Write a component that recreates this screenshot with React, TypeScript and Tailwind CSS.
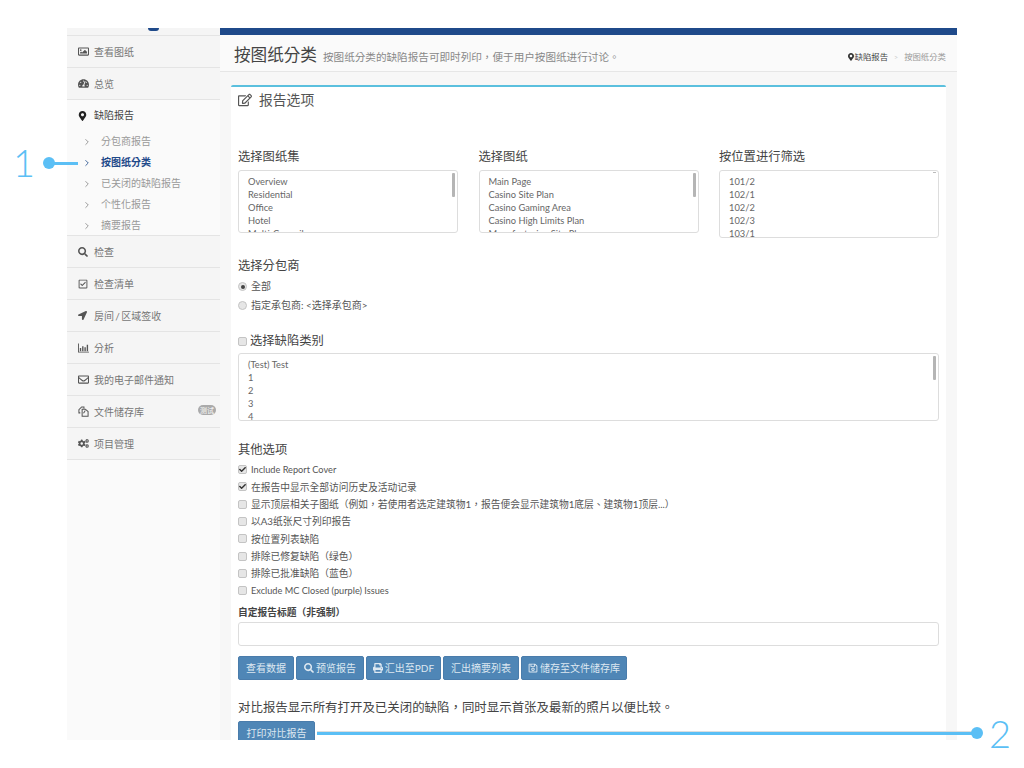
import {
  FaRegImage,
  FaTachometerAlt,
  FaMapMarkerAlt,
  FaSearch,
  FaRegCheckSquare,
  FaLocationArrow,
  FaRegEnvelope,
  FaCogs,
  FaRegEdit,
  FaPrint,
  FaRegSave,
  FaCheck,
} from "react-icons/fa"
import { LuChevronRight } from "react-icons/lu"
import type { ReactNode } from "react"

function BarsIcon() {
  return (
    <svg viewBox="0 0 12 10" className="w-[11px] h-[10px]" fill="currentColor">
      <path d="M0 0h1v9h11v1H0z" />
      <path d="M2 5h1.5v3.5H2zM4.5 3h1.5v5.5H4.5zM7 4.2h1.5v4.3H7zM9.5 1.5H11v7H9.5z" />
    </svg>
  )
}

function FilesIcon() {
  return (
    <svg viewBox="0 0 12 12" className="w-[11px] h-[11px]" fill="none" stroke="currentColor" strokeWidth="1.1">
      <path d="M2.5 7.5H1V4l3-3h2.5v2" />
      <path d="M4.5 3.5H8l3 2.5v5.2H4.5z" />
      <path d="M6 8l2-3" />
    </svg>
  )
}

function MenuRow({ icon, label, badge }: { icon: ReactNode; label: string; badge?: string }) {
  return (
    <div className="h-[32px] flex items-center pl-[11px] pr-[4px] bg-[#f5f5f5] border-b border-[#e4e4e4] text-[#777]">
      <span className="w-[16px] flex justify-start text-[#555]">{icon}</span>
      <span className="mt-[1px] text-[10px] [word-spacing:-1.2px]">{label}</span>
      {badge && (
        <span className="ml-auto mb-[4px] h-[10px] w-[18px] rounded-full bg-[#aaa] text-white text-[7px] leading-[10px] text-center">
          {badge}
        </span>
      )}
    </div>
  )
}

function SubRow({ label, active }: { label: string; active?: boolean }) {
  return (
    <div className="h-[21px] flex items-center pl-[15px]">
      <LuChevronRight className={active ? "w-[10px] h-[10px] text-[#1f4a8a]" : "w-[10px] h-[10px] text-[#888]"} />
      <span className={active ? "ml-[9px] text-[10px] font-bold text-[#1f4a8a]" : "ml-[9px] text-[10px] text-[#999]"}>
        {label}
      </span>
    </div>
  )
}

function ListBox({ items, h, thumb, tiny }: { items: string[]; h: string; thumb?: boolean; tiny?: boolean }) {
  return (
    <div className={`${h} relative overflow-hidden rounded-[3px] border border-[#ddd] pl-[9px] pt-[4px] text-[9.3px] leading-[13.1px] text-[#666]`}>
      {items.map((t) => (
        <div key={t}>{t}</div>
      ))}
      {thumb && <div className="absolute right-[2px] top-[2px] w-[3px] h-[24px] rounded-[1px] bg-[#b5b5b5]" />}
      {tiny && <div className="absolute right-[2px] top-[1px] w-[3px] h-[1px] bg-[#bbb]" />}
    </div>
  )
}

function Check({ on }: { on?: boolean }) {
  return (
    <span className="w-[9px] h-[9px] shrink-0 rounded-[2px] border border-[#c4c4c4] bg-[#e6e6e6] flex items-center justify-center">
      {on && <FaCheck className="w-[7px] h-[7px] text-[#333]" />}
    </span>
  )
}

function Radio({ on }: { on?: boolean }) {
  return (
    <span className="w-[9px] h-[9px] shrink-0 rounded-full border border-[#c4c4c4] bg-[#e6e6e6] flex items-center justify-center">
      {on && <span className="w-[4px] h-[4px] rounded-full bg-[#444]" />}
    </span>
  )
}

function Btn({ w, icon, children }: { w: string; icon?: ReactNode; children: ReactNode }) {
  return (
    <div className={`${w} h-[24px] flex items-center justify-center gap-[2px] rounded-[2px] bg-[#4f86b6] border border-[#4a7cab] text-[10px] text-[#dde8f1]`}>
      {icon}
      <span>{children}</span>
    </div>
  )
}

const options = [
  { label: "Include Report Cover", on: true, latin: true },
  { label: "在报告中显示全部访问历史及活动记录", on: true },
  { label: "显示顶层相关子图纸（例如，若使用者选定建筑物1，报告便会显示建筑物1底层、建筑物1顶层...）" },
  { label: "以A3纸张尺寸列印报告" },
  { label: "按位置列表缺陷" },
  { label: "排除已修复缺陷（绿色）" },
  { label: "排除已批准缺陷（蓝色）" },
  { label: "Exclude MC Closed (purple) Issues", latin: true },
]

export default function App() {
  return (
    <div className="relative w-[1024px] h-[768px] overflow-hidden bg-white pt-[28px] pl-[67px] font-['Lato','Noto_Sans_CJK_TC',sans-serif]">
      <div className="w-[890px] h-[712px] flex overflow-hidden">
        {/* sidebar */}
        <aside className="w-[153px] h-full shrink-0 bg-[#fafafa]">
          <div className="h-[8px] bg-[#f5f5f5] border-b border-[#e4e4e4] flex justify-center">
            <span className="ml-[20px] w-[11px] h-[3px] rounded-b-full bg-[#1f4a8a]" />
          </div>
          <MenuRow icon={<FaRegImage className="w-[11px] h-[11px]" />} label="查看图纸" />
          <MenuRow icon={<FaTachometerAlt className="w-[11px] h-[11px]" />} label="总览" />
          <div className="h-[136px] bg-[#fafafa] border-b border-[#e4e4e4]">
            <div className="h-[31px] flex items-center pl-[11px] text-[#444]">
              <span className="w-[16px]">
                <FaMapMarkerAlt className="w-[9px] h-[10px] text-[#222]" />
              </span>
              <span className="text-[10px]">缺陷报告</span>
            </div>
            <div>
              <SubRow label="分包商报告" />
              <SubRow label="按图纸分类" active />
              <SubRow label="已关闭的缺陷报告" />
              <SubRow label="个性化报告" />
              <SubRow label="摘要报告" />
            </div>
          </div>
          <MenuRow icon={<FaSearch className="w-[10px] h-[10px]" />} label="检查" />
          <MenuRow icon={<FaRegCheckSquare className="w-[10px] h-[10px]" />} label="检查清单" />
          <MenuRow icon={<FaLocationArrow className="w-[9px] h-[9px]" />} label="房间 / 区域签收" />
          <MenuRow icon={<BarsIcon />} label="分析" />
          <MenuRow icon={<FaRegEnvelope className="w-[11px] h-[11px]" />} label="我的电子邮件通知" />
          <MenuRow icon={<FilesIcon />} label="文件储存库" badge="测试" />
          <MenuRow icon={<FaCogs className="w-[11px] h-[11px]" />} label="项目管理" />
        </aside>

        {/* main */}
        <main className="w-[737px] shrink-0 h-full bg-[#f7f7f7]">
          <div className="h-[7px] bg-[#1f4a8a]" />
          <div className="h-[37px] bg-[#fafafa] border-b border-[#e6e6e6] flex items-center pt-[4px] pl-[14px] pr-[11px]">
            <h1 className="text-[16.6px] text-[#444]">按图纸分类</h1>
            <span className="ml-[6px] mt-[5px] text-[10.6px] text-[#888]">按图纸分类的缺陷报告可即时列印，便于用户按图纸进行讨论。</span>
            <div className="ml-auto flex items-center text-[8.4px] mt-[5px]">
              <FaMapMarkerAlt className="w-[6px] h-[8px] mr-[1px] text-[#333]" />
              <span className="text-[#444]">缺陷报告</span>
              <span className="mx-[6px] text-[#ccc] text-[7px]">&gt;</span>
              <span className="text-[#999]">按图纸分类</span>
            </div>
          </div>

          <section className="mt-[13px] ml-[11px] w-[715px] h-[700px] bg-white rounded-t-[2px] border-t-2 border-[#5bc0de] px-[7px]">
            <div className="h-[26px] flex items-center text-[#555]">
              <FaRegEdit className="w-[14px] h-[14px] text-[#555]" />
              <span className="ml-[7px] text-[13.8px]">报告选项</span>
            </div>

            <div className="mt-[32px] grid grid-cols-3 gap-x-[20.5px] items-start">
              <div>
                <h3 className="h-[25px] text-[12.3px] leading-[23px] text-[#444]">选择图纸集</h3>
                <ListBox h="h-[63px]" thumb items={["Overview", "Residential", "Office", "Hotel", "Multi-Council"]} />
              </div>
              <div>
                <h3 className="h-[25px] text-[12.3px] leading-[23px] text-[#444]">选择图纸</h3>
                <ListBox h="h-[63px]" thumb items={["Main Page", "Casino Site Plan", "Casino Gaming Area", "Casino High Limits Plan", "Manufacturing Site Plan"]} />
              </div>
              <div>
                <h3 className="h-[25px] text-[12.3px] leading-[23px] text-[#444]">按位置进行筛选</h3>
                <ListBox h="h-[68px]" tiny items={["101/2", "102/1", "102/2", "102/3", "103/1", "103/2"]} />
              </div>
            </div>

            <h3 className="mt-[17px] h-[22px] text-[12.3px] leading-[22px] text-[#444]">选择分包商</h3>
            <div className="flex items-center gap-[4px] h-[19px] text-[10px] text-[#555]">
              <Radio on />
              <span>全部</span>
            </div>
            <div className="flex items-center gap-[4px] h-[19px] text-[10px] text-[#555]">
              <Radio />
              <span>指定承包商:  &lt;选择承包商&gt;</span>
            </div>

            <div className="mt-[15px] h-[22px] flex items-center gap-[3px] text-[12.3px] text-[#444]">
              <Check />
              <span>选择缺陷类别</span>
            </div>
            <div className="mt-[1px]">
              <ListBox h="h-[68px]" thumb items={["(Test) Test", "1", "2", "3", "4", "5"]} />
            </div>

            <h3 className="mt-[18px] h-[22px] text-[12.3px] leading-[22px] text-[#444]">其他选项</h3>
            <div>
              {options.map((o) => (
                <div key={o.label} className="flex items-center gap-[4px] h-[17.3px] text-[#555]">
                  <Check on={o.on} />
                  <span className={o.latin ? "text-[9.2px]" : "text-[9.75px]"}>{o.label}</span>
                </div>
              ))}
            </div>

            <div className="mt-[6px] h-[14px] text-[9.75px] leading-[14px] font-bold text-[#444]">自定报告标题（非强制）</div>
            <div className="mt-[3px] h-[24px] rounded-[3px] border border-[#ddd] bg-white" />

            <div className="mt-[10px] flex gap-[2px]">
              <Btn w="w-[56px]">查看数据</Btn>
              <Btn w="w-[68px]" icon={<FaSearch className="w-[10px] h-[10px]" />}>预览报告</Btn>
              <Btn w="w-[75px]" icon={<FaPrint className="w-[10px] h-[10px]" />}>汇出至PDF</Btn>
              <Btn w="w-[76px]">汇出摘要列表</Btn>
              <Btn w="w-[106px]" icon={<FaRegSave className="w-[10px] h-[10px]" />}>储存至文件储存库</Btn>
            </div>

            <p className="mt-[19px] h-[18px] text-[12.45px] leading-[18px] text-[#444]">对比报告显示所有打开及已关闭的缺陷，同时显示首张及最新的照片以便比较。</p>
            <div className="mt-[4px]">
              <Btn w="w-[77px]">打印对比报告</Btn>
            </div>
          </section>
        </main>
      </div>

      {/* callouts */}
      <div className="absolute left-[13px] top-[141px] text-[38px] leading-[42px] font-light text-[#5bbff5]">1</div>
      <div className="absolute left-[43px] top-[157px] w-[12px] h-[12px] rounded-full bg-[#5bbff5]" />
      <div className="absolute left-[50px] top-[161.5px] w-[28px] h-[3px] bg-[#5bbff5]" />
      <div className="absolute left-[317px] top-[731.5px] w-[660px] h-[3px] bg-[#5bbff5] shadow-[0_-1px_0_#ddd]" />
      <div className="absolute left-[971px] top-[727px] w-[12px] h-[12px] rounded-full bg-[#5bbff5]" />
      <div className="absolute left-[989px] top-[712px] text-[38px] leading-[42px] font-light text-[#5bbff5]">2</div>
    </div>
  )
}
